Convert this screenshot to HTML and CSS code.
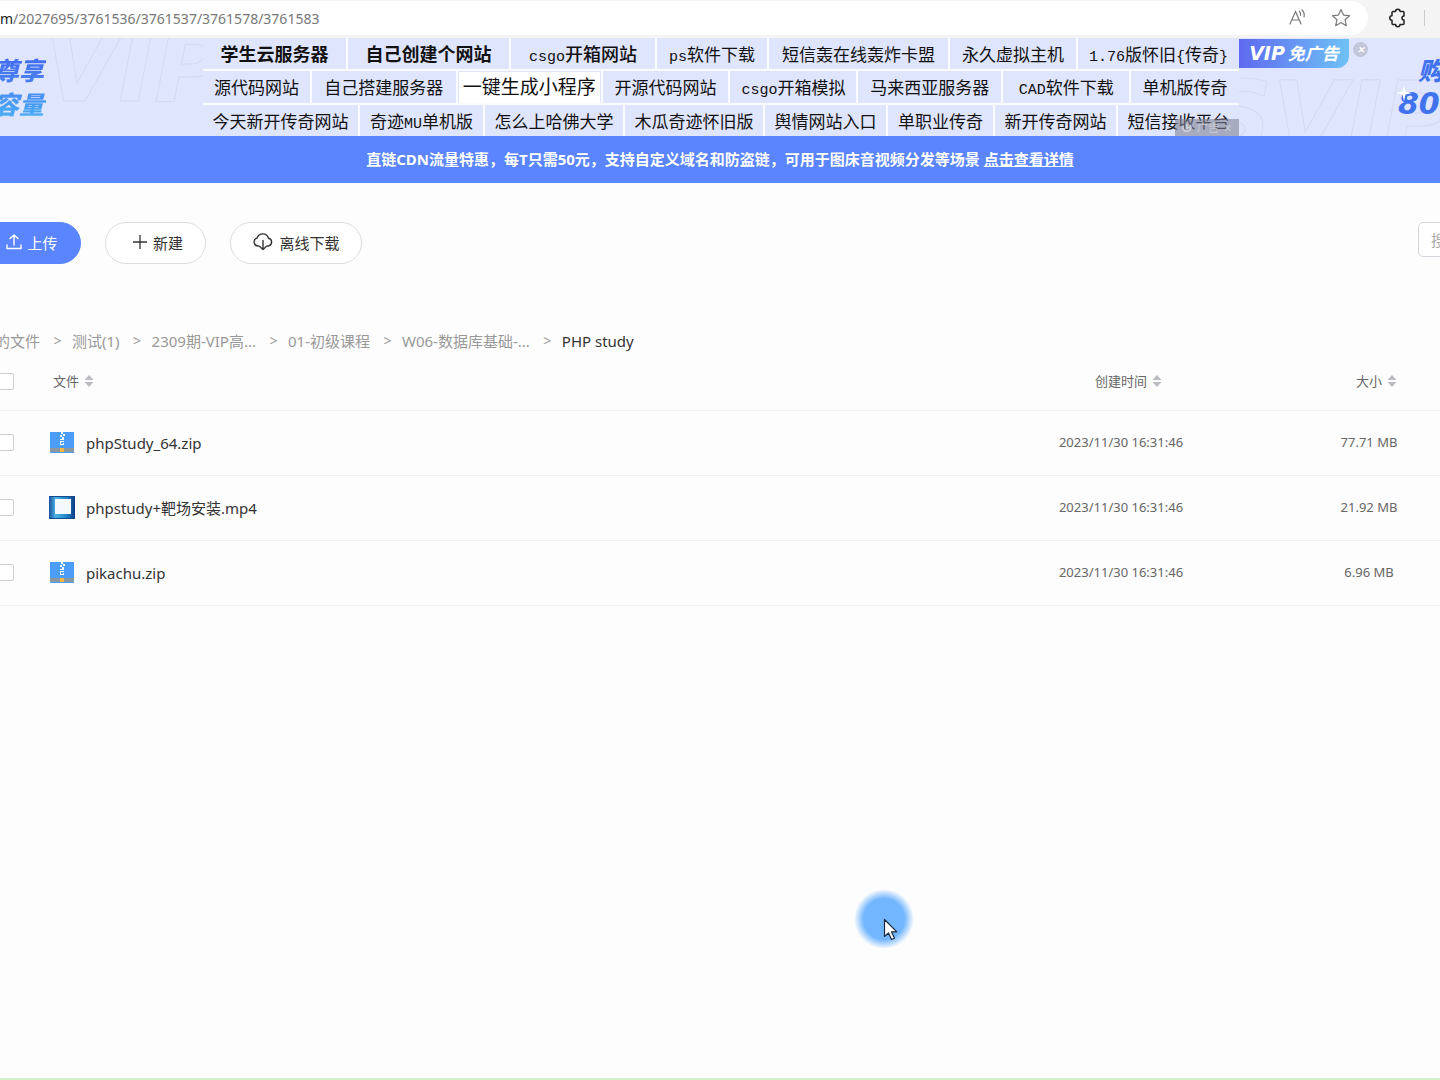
FILE: index.html
```html
<!DOCTYPE html>
<html lang="zh-CN">
<head>
<meta charset="utf-8">
<title>PHP study</title>
<link rel="stylesheet" href="styles.css">
</head>
<body>
<svg class="defs" width="0" height="0" aria-hidden="true">
  <symbol id="zip" viewBox="0 0 24 21">
    <path fill="#4c9df8" d="M0 0h24v16H0z"/>
    <path fill="#8b98a0" d="M0 16h24v4H0z"/>
    <path fill="#4c9df8" d="M0 20h24v1H0z"/>
    <path fill="#fff" d="M11 0h2v2h-2zM13 2h2v2h-2zM10 3h2v2h-2zM12 5h2v2h-2zM10 7h4v1h-4zM10 9h4v1h-3v2h2v-1h1v2h-4z"/>
    <path fill="#f5b547" d="M10 16h4v4h-4z"/>
  </symbol>
  <symbol id="video" viewBox="0 0 26 23">
    <defs><linearGradient id="vg"><stop offset="0" stop-color="#1d4f9d"/><stop offset=".25" stop-color="#49b3e4"/><stop offset=".7" stop-color="#1e7ec4"/><stop offset="1" stop-color="#0c3c7d"/></linearGradient></defs>
    <path fill="url(#vg)" d="M0 0h26v23H0z"/>
    <path fill="#124a8c" d="M0 0h26v1H0zM0 22h26v1H0z"/>
    <path fill="#f3f9fe" d="M6 3h16v15H6z"/>
  </symbol>
  <symbol id="sort" viewBox="0 0 10 14"><path fill="#bbbdc3" d="M5 1l4.500 5H.5zM5 13l4.500-5H.5z"/></symbol>
</svg>

<header class="chrome">
  <div class="address">
    <span class="url"><b>m</b>/2027695/3761536/3761537/3761578/3761583</span>
    <button class="icon-btn" aria-label="朗读">
      <svg width="20" height="20" viewBox="0 0 20 20" fill="none" stroke="#77797c" stroke-width="1.2" stroke-linecap="round"><path d="M2 16L7.500 3.500 13 16M4 12h7M11.500 3.500q1.500 1.500 1 4M14 2q3 3 2 7"/></svg>
    </button>
    <button class="icon-btn" aria-label="收藏">
      <svg width="20" height="20" viewBox="0 0 20 20" fill="none" stroke="#77797c" stroke-width="1.2" stroke-linejoin="round"><path d="M10 1.500l2.500 5.600 6 .6-4.500 4 1.300 6-5.300-3.100-5.300 3.100 1.300-6-4.500-4 6-.6z"/></svg>
    </button>
  </div>
  <button class="icon-btn" aria-label="扩展">
    <svg width="20" height="20" viewBox="0 0 20 20" fill="none" stroke="#222" stroke-width="1.500" stroke-linejoin="round"><path d="M5 3.500h2.500a2.300 2.300 0 0 1 4.600 0H15q1 0 1 1V8a2 2 0 0 0 0 4v3.500q0 1-1 1h-3a2.200 2.200 0 0 1-4.400 0H5q-1 0-1-1v-3.300a2.200 2.200 0 0 1 0-4.400V4.500q0-1 1-1z"/></svg>
  </button>
  <span class="divider"></span>
</header>

<section class="banner">
  <div class="promo promo-left">
    <span class="ghost">VIP</span>
    <p>尊享</p>
    <p>容量</p>
  </div>
  <nav class="ads">
    <div class="ad-row row-one">
      <a href="#" class="strong">学生云服务器</a><a href="#" class="strong">自己创建个网站</a><a href="#" class="medium"><span>csgo</span>开箱网站</a><a href="#"><span>ps</span>软件下载</a><a href="#">短信轰在线轰炸卡盟</a><a href="#">永久虚拟主机</a><a href="#"><span>1.76</span>版怀旧<span>{</span>传奇<span>}</span></a>
    </div>
    <div class="ad-row row-two">
      <a href="#">源代码网站</a><a href="#">自己搭建服务器</a><a href="#" class="picked">一键生成小程序</a><a href="#">开源代码网站</a><a href="#"><span>csgo</span>开箱模拟</a><a href="#">马来西亚服务器</a><a href="#"><span>CAD</span>软件下载</a><a href="#">单机版传奇</a>
    </div>
    <div class="ad-row row-three">
      <a href="#">今天新开传奇网站</a><a href="#">奇迹<span>MU</span>单机版</a><a href="#">怎么上哈佛大学</a><a href="#">木瓜奇迹怀旧版</a><a href="#">舆情网站入口</a><a href="#">单职业传奇</a><a href="#">新开传奇网站</a><a href="#">短信接收平台</a>
    </div>
    <div class="ad-mark">
      <svg width="12" height="12" viewBox="0 0 12 12" fill="none" stroke="#c9cbd6" stroke-width="2"><path d="M2 4a4 4 0 1 0 7-1M6 2v4l3-1"/></svg>
      <span>广告</span><span class="x">✕</span>
    </div>
  </nav>
  <div class="promo promo-right">
    <span class="ghost">SVIP</span>
    <div class="vip-line"><a href="#" class="vip"><b>VIP</b>免广告</a><button class="close" aria-label="关闭">✕</button></div>
    <div class="offer">
      <p class="buy">购</p>
      <p class="num">80</p>
      <svg class="spark" width="16" height="16" viewBox="0 0 16 16"><path fill="#fff" d="M8 0l1.500 6.500L16 8 9.500 9.500 8 16 6.500 9.500 0 8l6.500-1.500z"/></svg>
    </div>
  </div>
</section>

<p class="notice">直链CDN流量特惠，每T只需50元，支持自定义域名和防盗链，可用于图床音视频分发等场景 <a href="#">点击查看详情</a></p>

<main class="content">
  <div class="toolbar">
    <button class="pill primary">
      <svg width="16" height="16" viewBox="0 0 16 16" fill="none" stroke="#fff" stroke-width="1.400" stroke-linecap="round" stroke-linejoin="round"><path d="M8 11V1M4 4.500L8 1l4 3.500M1 11v3.500h14V11"/></svg>上传
    </button>
    <button class="pill">
      <svg width="16" height="16" viewBox="0 0 16 16" stroke="#333" stroke-width="1.300"><path d="M8 1v14M1 8h14"/></svg>新建
    </button>
    <button class="pill wide">
      <svg width="22" height="18" viewBox="0 0 22 18" fill="none" stroke="#333" stroke-width="1.400" stroke-linecap="round" stroke-linejoin="round"><path d="M7 13H5.500A4 4 0 0 1 5 5.200a6 6 0 0 1 11.500 0A4 4 0 0 1 16.500 13H15M11 7.500v9M8 13.800l3 2.700 3-2.700"/></svg>离线下载
    </button>
    <input class="search" type="text" placeholder="搜索文件" aria-label="搜索文件">
  </div>

  <nav class="crumbs">
    <a href="#">我的文件</a><i>&gt;</i><a href="#">测试(1)</a><i>&gt;</i><a href="#">2309期-VIP高...</a><i>&gt;</i><a href="#">01-初级课程</a><i>&gt;</i><a href="#">W06-数据库基础-...</a><i>&gt;</i><strong>PHP study</strong>
  </nav>

  <table class="files">
    <colgroup><col class="c-check"><col><col class="c-meta"><col class="c-meta"></colgroup>
    <thead>
      <tr>
        <th><input type="checkbox" aria-label="全选"></th>
        <th class="name">文件<svg class="sort" width="10" height="14"><use href="#sort"/></svg></th>
        <th>创建时间<svg class="sort out" width="10" height="14"><use href="#sort"/></svg></th>
        <th>大小<svg class="sort out" width="10" height="14"><use href="#sort"/></svg></th>
      </tr>
    </thead>
    <tbody>
      <tr>
        <td><input type="checkbox" aria-label="phpStudy_64.zip"></td>
        <td class="name"><a href="#"><svg width="26" height="21"><use href="#zip"/></svg>phpStudy_64.zip</a></td>
        <td>2023/11/30 16:31:46</td><td>77.71 MB</td>
      </tr>
      <tr>
        <td><input type="checkbox" aria-label="phpstudy+靶场安装.mp4"></td>
        <td class="name"><a href="#"><svg width="26" height="23"><use href="#video"/></svg>phpstudy+靶场安装.mp4</a></td>
        <td>2023/11/30 16:31:46</td><td>21.92 MB</td>
      </tr>
      <tr>
        <td><input type="checkbox" aria-label="pikachu.zip"></td>
        <td class="name"><a href="#"><svg width="26" height="21"><use href="#zip"/></svg>pikachu.zip</a></td>
        <td>2023/11/30 16:31:46</td><td>6.96 MB</td>
      </tr>
    </tbody>
  </table>
</main>

<footer class="edge"></footer>

<div class="pointer">
  <svg width="16" height="24" viewBox="0 0 16 24"><path fill="#fff" stroke="#1c2b40" stroke-width="1.200" stroke-linejoin="round" d="M1.500 1.500v17l4-3.500 3 6.500 3-1.300-3-6.400h5.300z"/></svg>
</div>
</body>
</html>
```

FILE: styles.css
```css
* { box-sizing: border-box; }

body {
  margin: 0;
  min-height: 100vh;
  display: flex;
  flex-direction: column;
  position: relative;
  overflow: hidden;
  background: #fdfdfd;
  color: #333;
  font-family: "Noto Sans", "Noto Sans CJK SC", sans-serif;
  font-size: 15px;
}

p { margin: 0; }
a { color: inherit; text-decoration: none; }
button { border: 0; padding: 0; background: none; font: inherit; color: inherit; }
svg { flex: none; }
.defs { position: absolute; }

/* browser bar */
.chrome {
  display: flex;
  align-items: center;
  height: 38px;
  padding-bottom: 2px;
  background: #f4f4f4;
}
.address {
  flex: 1;
  display: flex;
  align-items: center;
  gap: 23px;
  height: 34px;
  padding-right: 17px;
  margin-right: 20px;
  border-radius: 0 17px 17px 0;
  background: #fff;
}
.url { flex: 1; color: #777; font-size: 14px; }
.url b { color: #222; font-weight: 400; }
.icon-btn { display: flex; }
.divider { width: 1px; height: 16px; margin: 0 15px 0 16px; background: #ccc; }

/* sponsored banner */
.banner {
  display: flex;
  height: 98px;
  background: #dfe5fd;
}
.promo {
  position: relative;
  overflow: hidden;
  color: #4172ee;
  font-size: 25px;
  font-weight: 900;
  font-style: italic;
  line-height: 34px;
}
.promo-left { flex: 0 0 203px; padding-top: 15px; }
.promo-left p {
  position: relative;
  width: 52px;
  margin-left: -6px;
  background: linear-gradient(#4067ee, #4a86f2);
  background-clip: text;
  color: transparent;
}
.promo-left p:last-child { background-image: linear-gradient(#4585f1, #4cb4f5); background-clip: text; }
.promo-right { flex: 1; }
.ghost {
  position: absolute;
  left: 44px;
  top: -15px;
  font: italic 700 96px/90px "DejaVu Sans", sans-serif;
  color: transparent;
  -webkit-text-stroke: 1px #d3d9ef;
}
.promo-right .ghost { left: -36px; top: 34px; }
.vip-line { position: relative; display: flex; align-items: flex-start; gap: 4px; padding-top: 1px; }
.vip {
  width: 110px;
  height: 29px;
  border-radius: 0 0 12px 0;
  background: linear-gradient(90deg, #5f69f0, #6ec2f5);
  color: #fff;
  font-size: 17px;
  font-weight: 700;
  line-height: 28px;
  text-align: center;
  white-space: nowrap;
}
.vip b { margin-right: 3px; font-family: "DejaVu Sans", sans-serif; font-size: 19px; }
.close {
  width: 15px;
  height: 15px;
  margin-top: 3px;
  border-radius: 50%;
  background: #c2c6d8;
  color: #fff;
  font-size: 9px;
  line-height: 15px;
}
.offer { position: absolute; right: 0; top: 15px; width: 42px; white-space: nowrap; }
.buy { padding-left: 20px; }
.num { font-family: "DejaVu Sans", sans-serif; font-size: 30px; font-weight: 700; }
.spark { position: absolute; left: -2px; top: 32px; }

.ads {
  position: relative;
  flex: 0 1 1036px;
  display: grid;
  grid-template-rows: repeat(3, 1fr);
  gap: 2px;
  background: #fafbff;
}
.ad-row { display: grid; gap: 2px; overflow: hidden; }
.row-one { grid-template-columns: 143fr 161fr 144fr 110fr 179fr 126fr 161fr; }
.row-two { grid-template-columns: 107fr 144fr 143fr 126fr 126fr 143fr 126fr 108fr; }
.row-three { grid-template-columns: 155fr 123fr 138fr 138fr 121fr 105fr 121fr 121fr; }
.ad-row a {
  min-width: 0;
  background: #dfe5fd;
  color: #111;
  font-family: "Noto Sans CJK SC", sans-serif;
  font-size: 17px;
  font-weight: 400;
  line-height: 31px;
  text-align: center;
  white-space: nowrap;
}
.ad-row span { font-family: "Liberation Mono", monospace; font-size: 15px; }
.ad-row .strong { font-size: 18px; font-weight: 700; }
.ad-row .medium { font-size: 18px; font-weight: 500; }
.ad-row .picked { border: 1px solid #dfe5fd; background: #fff; font-size: 19px; line-height: 28px; }
.ad-mark {
  position: absolute;
  right: 0;
  bottom: 0;
  display: flex;
  align-items: center;
  gap: 4px;
  width: 64px;
  height: 17px;
  padding-left: 6px;
  background: rgba(130, 132, 150, .6);
  color: #c9cbd6;
  font-size: 11px;
  line-height: 17px;
}

.notice {
  height: 47px;
  background: #5a85ff;
  color: #fff;
  font-weight: 700;
  line-height: 47px;
  text-align: center;
}
.notice a { text-decoration: underline; }

/* file manager, scrolled sideways past its left edge */
.content { margin: 39px -53px 0 -21px; }
.toolbar { display: flex; align-items: flex-start; gap: 24px; margin-right: -125px; }
.pill {
  display: flex;
  align-items: center;
  justify-content: center;
  gap: 5px;
  width: 101px;
  height: 42px;
  padding: 0 0 2px 4px;
  border: 1px solid #dcdde0;
  border-radius: 21px;
  background: #fff;
}
.pill.wide { width: 132px; padding-left: 0; }
.pill.primary { width: 102px; border-color: #5a85ff; background: #5a85ff; color: #fff; }
.search {
  width: 200px;
  height: 35px;
  margin-left: auto;
  padding: 0 12px;
  border: 1px solid #d5d7dc;
  border-radius: 5px;
  background: #fff;
  font: inherit;
}
.search::placeholder { color: #aaa; }

.crumbs { display: flex; margin-top: 65px; padding-left: 1px; color: #999; line-height: 24px; }
.crumbs i { width: 32px; padding-left: 3px; font-size: 14px; font-style: normal; text-align: center; }
.crumbs strong { color: #333; font-weight: 400; }

.files { width: 100%; border-collapse: collapse; table-layout: fixed; color: #666; font-size: 13px; }
.c-check { width: 70px; }
.c-meta { width: 248px; }
.files th { height: 57px; padding: 0 0 2px; font-weight: 400; border-bottom: 1px solid #f0f0f2; }
.files td { height: 65px; padding: 0 0 2px; text-align: center; border-bottom: 1px solid #f0f0f2; }
.files th:first-child, .files td:first-child { padding-bottom: 0; text-align: left; }
.files .name { text-align: left; }
.files th.name { padding-left: 4px; }
.files td.name { padding-bottom: 0; }
td.name a { display: flex; align-items: center; gap: 11px; color: #333; font-size: 15px; }
.sort { margin-left: 5px; vertical-align: -2px; }
.sort.out { margin-right: -15px; }
.files input {
  appearance: none;
  display: block;
  width: 17px;
  height: 17px;
  margin: 0 0 0 18px;
  border: 1px solid #ccced3;
  border-radius: 2px;
  background: #fff;
}

.edge { height: 2px; margin-top: auto; background: #d3efcb; }

.pointer {
  position: absolute;
  left: 854px;
  top: 889px;
  width: 60px;
  height: 60px;
  padding: 29px 0 0 29px;
  border-radius: 50%;
  background: radial-gradient(closest-side, #72b6ff 68%, rgba(114, 182, 255, 0));
}
```
